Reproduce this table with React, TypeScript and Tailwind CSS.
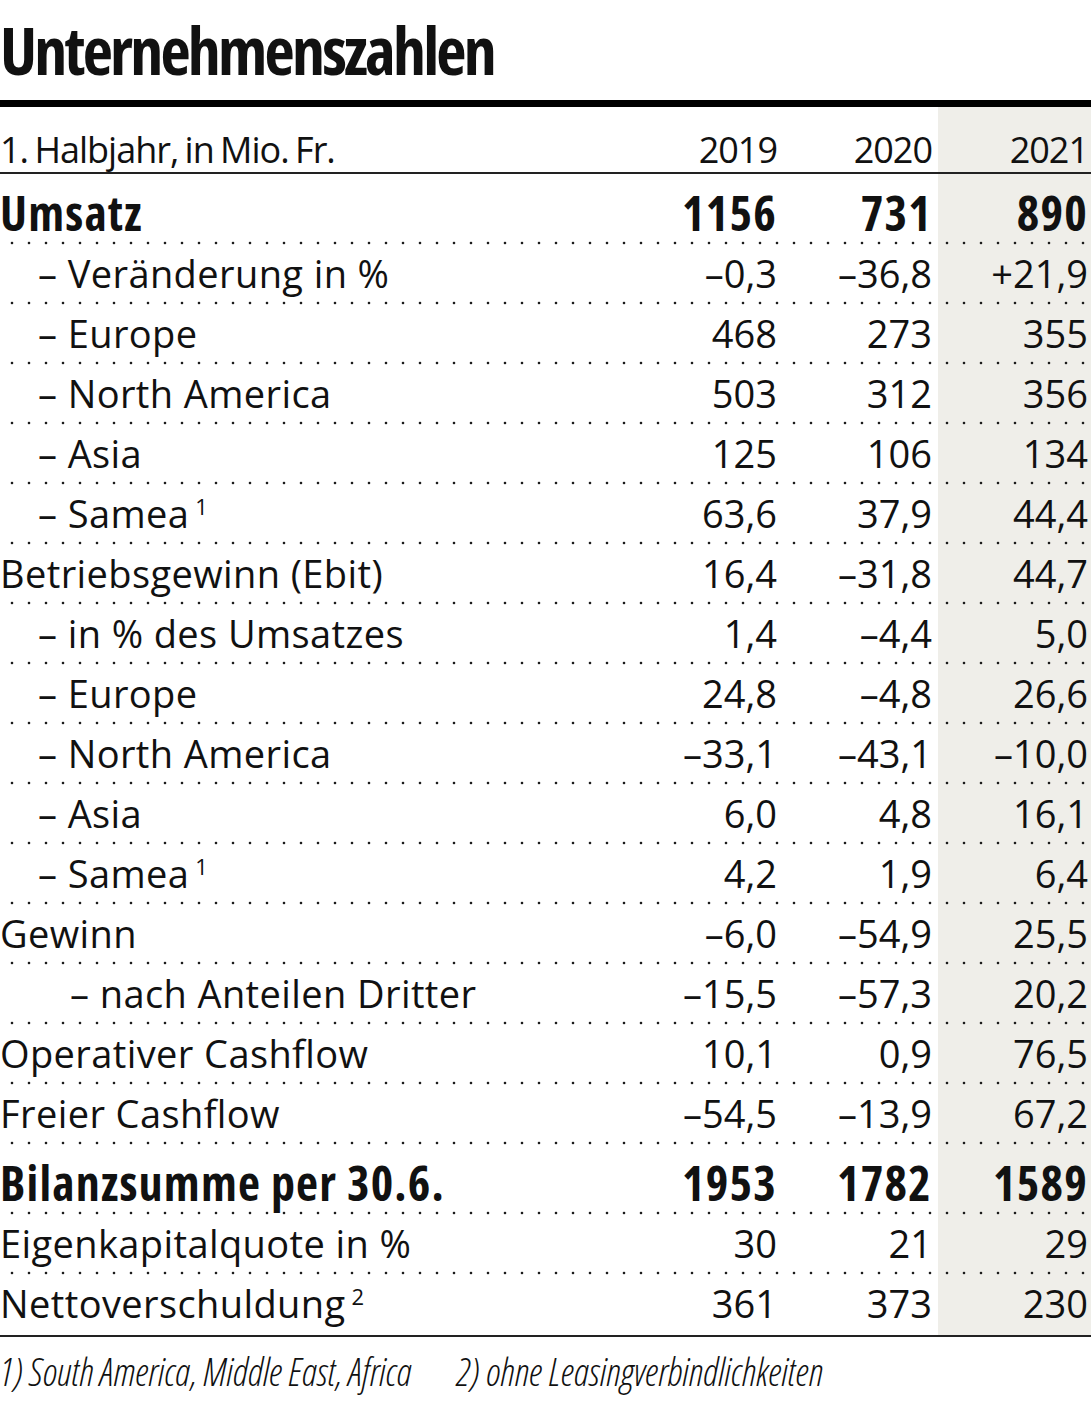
import React from "react";

type Row = {
  label: string;
  sup?: string;
  values: [string, string, string];
  bold?: boolean;
  indent?: 0 | 1 | 2;
  last?: boolean;
};

const rows: Row[] = [
  { label: "Umsatz", values: ["1156", "731", "890"], bold: true },
  { label: "– Veränderung in %", values: ["–0,3", "–36,8", "+21,9"], indent: 1 },
  { label: "– Europe", values: ["468", "273", "355"], indent: 1 },
  { label: "– North America", values: ["503", "312", "356"], indent: 1 },
  { label: "– Asia", values: ["125", "106", "134"], indent: 1 },
  { label: "– Samea", sup: "1", values: ["63,6", "37,9", "44,4"], indent: 1 },
  { label: "Betriebsgewinn (Ebit)", values: ["16,4", "–31,8", "44,7"] },
  { label: "– in % des Umsatzes", values: ["1,4", "–4,4", "5,0"], indent: 1 },
  { label: "– Europe", values: ["24,8", "–4,8", "26,6"], indent: 1 },
  { label: "– North America", values: ["–33,1", "–43,1", "–10,0"], indent: 1 },
  { label: "– Asia", values: ["6,0", "4,8", "16,1"], indent: 1 },
  { label: "– Samea", sup: "1", values: ["4,2", "1,9", "6,4"], indent: 1 },
  { label: "Gewinn", values: ["–6,0", "–54,9", "25,5"] },
  { label: "– nach Anteilen Dritter", values: ["–15,5", "–57,3", "20,2"], indent: 2 },
  { label: "Operativer Cashflow", values: ["10,1", "0,9", "76,5"] },
  { label: "Freier Cashflow", values: ["–54,5", "–13,9", "67,2"] },
  { label: "Bilanzsumme per 30.6.", values: ["1953", "1782", "1589"], bold: true },
  { label: "Eigenkapitalquote in %", values: ["30", "21", "29"] },
  { label: "Nettoverschuldung", sup: "2", values: ["361", "373", "230"], last: true },
];

const dots =
  "bg-[radial-gradient(circle_at_2px_50%,#1c1c1c_0.95px,transparent_1.7px)] bg-[length:17px_4px] bg-bottom bg-repeat-x";

function TableRow({ row, idx }: { row: Row; idx: number }) {
  const height = idx === 0 ? "h-[71px]" : row.bold ? "h-[70px]" : "h-[60px]";
  const text = row.bold
    ? "text-[48px] font-bold [font-stretch:75%] tracking-[1.2px] pb-[8px]"
    : "text-[38px] font-normal [font-stretch:92%] pb-[13px]";
  const indent =
    row.indent === 1 ? "pl-[38px]" : row.indent === 2 ? "pl-[70px]" : "pl-0";

  return (
    <div
      className={`grid grid-cols-[1fr_156px_156px_153px] items-end leading-none ${height} ${text} ${
        row.last ? "" : dots
      }`}
    >
      <div className={`${indent} whitespace-nowrap ${row.bold ? "" : "tracking-[0.4px]"}`}>
        {row.label}
        {row.sup && (
          <span className="ml-[6px] text-[22px] tracking-normal relative -top-[13px]">{row.sup}</span>
        )}
      </div>
      <div className="text-right pr-[5px]">{row.values[0]}</div>
      <div className="text-right pr-[6px]">{row.values[1]}</div>
      <div className="text-right pr-[3px]">{row.values[2]}</div>
    </div>
  );
}

export default function App() {
  return (
    <div className="w-[1091px] h-[1417px] bg-white text-[#111] font-['Open_Sans',sans-serif]">
      {/* Title */}
      <div className="h-[100px] flex items-end pb-[18px]">
        <h1 className="text-[66px] leading-none font-bold [font-stretch:75%] tracking-[-2.8px]">
          Unternehmenszahlen
        </h1>
      </div>
      <div className="h-[7px] bg-black" />

      {/* Table body with shaded 2021 column */}
      <div className="bg-[linear-gradient(to_right,transparent_938px,#efeee9_938px)]">
        <div className="grid grid-cols-[1fr_156px_156px_153px] items-end h-[65px] pb-[4px] text-[36px] leading-none [font-stretch:92%] tracking-[-1px]">
          <div className="whitespace-nowrap [word-spacing:-2px]">1. Halbjahr, in Mio. Fr.</div>
          <div className="text-right pr-[5px]">2019</div>
          <div className="text-right pr-[6px]">2020</div>
          <div className="text-right pr-[3px]">2021</div>
        </div>
        <div className="h-[2px] bg-[#222]" />
        {rows.map((row, i) => (
          <TableRow key={i} row={row} idx={i} />
        ))}
      </div>
      <div className="h-[2px] bg-[#222]" />

      {/* Footnotes */}
      <div className="flex gap-[45px] pt-[15px] text-[38px] leading-none italic [font-stretch:75%] font-light">
        <span>1) South America, Middle East, Africa</span>
        <span>2) ohne Leasingverbindlichkeiten</span>
      </div>
    </div>
  );
}
